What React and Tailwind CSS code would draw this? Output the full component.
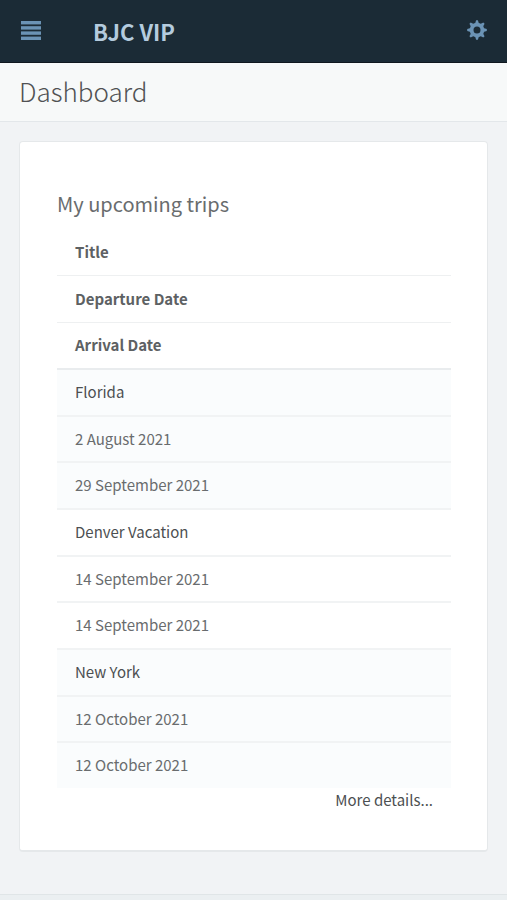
const trips = [
    { title: 'Florida', departure: '2 August 2021', arrival: '29 September 2021' },
    { title: 'Denver Vacation', departure: '14 September 2021', arrival: '14 September 2021' },
    { title: 'New York', departure: '12 October 2021', arrival: '12 October 2021' },
];

function MenuIcon() {
    return (
        <svg viewBox="0 0 20 19" className="w-5 h-[19px]" fill="currentColor" aria-hidden="true">
            <rect x="0" y="0" width="20" height="3.4" />
            <rect x="0" y="5.2" width="20" height="3.4" />
            <rect x="0" y="10.4" width="20" height="3.4" />
            <rect x="0" y="15.6" width="20" height="3.4" />
        </svg>
    );
}

function GearIcon() {
    return (
        <svg viewBox="0 0 20 20" className="w-5 h-5" aria-hidden="true">
            <g fill="currentColor">
                {[0, 45, 90, 135, 180, 225, 270, 315].map((angle) => (
                    <path key={angle} d="M9.1 0.2h1.8L12.2 4.5H7.8z" transform={`rotate(${angle} 10 10)`} />
                ))}
            </g>
            <circle cx="10" cy="10" r="5.4" fill="none" stroke="currentColor" strokeWidth="3.8" />
        </svg>
    );
}

function TripRow({ trip }) {
    return (
        <tr className="block odd:bg-[#fafcfd]">
            <td className="flex items-center h-[47px] px-[18px] border-b-2 border-[#f1f3f4]">
                <a href="#trip" className="text-[#4c4f51]">{trip.title}</a>
            </td>
            <td className="flex items-center h-[46px] px-[18px] border-b-2 border-[#f1f3f4]">{trip.departure}</td>
            <td className="flex items-center h-[45px] px-[18px]">{trip.arrival}</td>
        </tr>
    );
}

export default function App() {
    return (
        <div className="min-h-screen flex flex-col bg-[#f1f3f5] text-[#696c6e] text-[15px] font-['Noto_Sans_CJK_SC','Noto_Sans',sans-serif]">
            <header className="flex items-center h-[63px] px-5 bg-[#1b2b36] border-b border-[#10181f] text-[#6b93b5]">
                <button type="button" aria-label="Menu" className="px-px pb-0.5">
                    <MenuIcon />
                </button>
                <a href="#home" className="ml-[51px] text-[22px] leading-8 font-bold text-[#b4cbde]">BJC VIP</a>
                <button type="button" aria-label="Settings" className="ml-auto pb-0.5">
                    <GearIcon />
                </button>
            </header>

            <div className="flex items-center h-[59px] px-[19px] pb-0.5 bg-[#f7f9f9] border-b border-[#e3e7ea]">
                <h1 className="text-[26px] leading-9 font-light text-[#505153]">Dashboard</h1>
            </div>

            <main className="flex-1 p-[19px]">
                <section className="pl-[37px] pr-9 pt-12 pb-[38px] bg-white border border-b-2 border-[#e5e8ea] rounded-sm">
                    <h2 className="text-xl leading-7">My upcoming trips</h2>

                    <table className="block mt-3">
                        <thead className="block border-b border-[#e9ecee]">
                            <tr className="block text-left text-[#5d6163]">
                                <th className="flex items-center h-[46px] px-[18px] border-b border-[#eef0f1]">Title</th>
                                <th className="flex items-center h-[47px] px-[18px] border-b border-[#eef0f1]">Departure Date</th>
                                <th className="flex items-center h-[46px] px-[18px] border-b border-[#e9ecee]">Arrival Date</th>
                            </tr>
                        </thead>
                        <tbody className="block divide-y-2 divide-[#f1f3f4]">
                            {trips.map((trip) => (
                                <TripRow key={trip.title} trip={trip} />
                            ))}
                        </tbody>
                    </table>

                    <div className="flex justify-end pr-[18px]">
                        <a href="#trips" className="leading-6 text-[#4c4f51]">More details...</a>
                    </div>
                </section>
            </main>

            <footer className="h-1.5 bg-[#ebeff1] border-t border-[#e0e5e7]" />
        </div>
    );
}
